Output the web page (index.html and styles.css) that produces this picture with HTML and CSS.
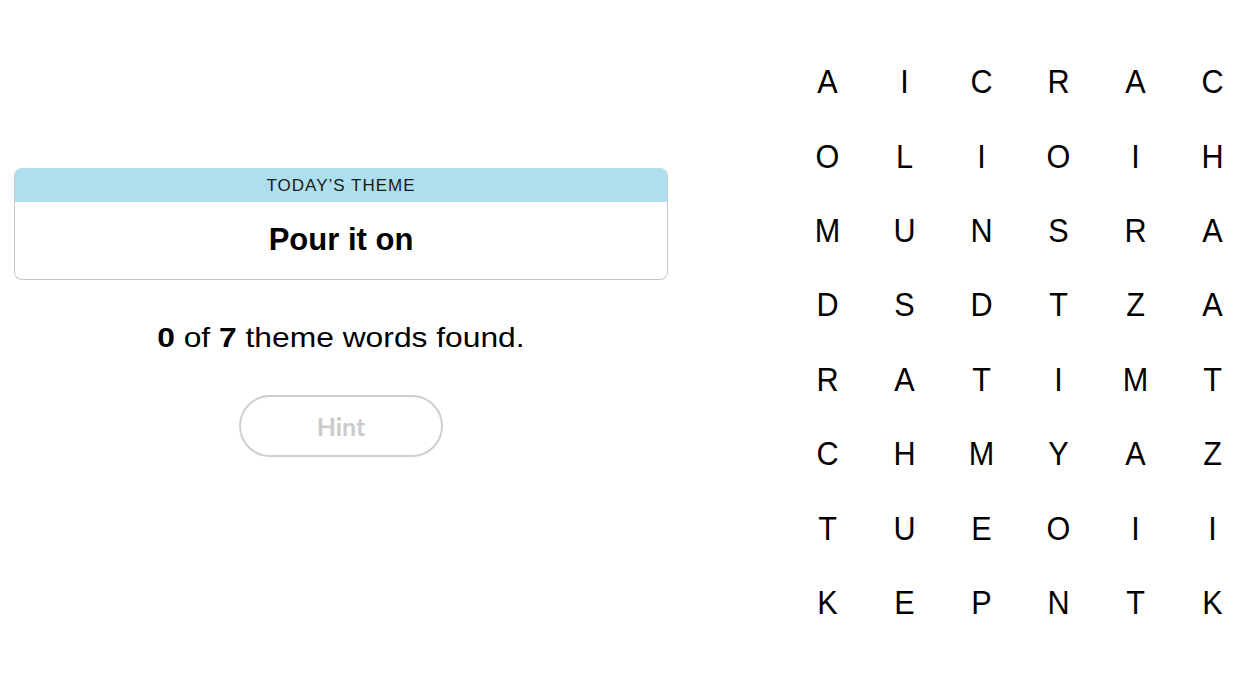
FILE: index.html
```html
<!DOCTYPE html>
<html lang="en">
<head>
<meta charset="utf-8">
<title>Strands</title>
<link rel="stylesheet" href="styles.css">
</head>
<body>
<main class="page">
  <section class="side">
    <div class="theme-card">
      <div class="theme-head">TODAY’S THEME</div>
      <div class="theme-body">Pour it on</div>
    </div>
    <p class="progress"><span class="wide"><b>0</b> of <b>7</b> theme words found.</span></p>
    <button class="hint" type="button">Hint</button>
  </section>
  <section class="board">
    <span>A</span><span>I</span><span>C</span><span>R</span><span>A</span><span>C</span>
    <span>O</span><span>L</span><span>I</span><span>O</span><span>I</span><span>H</span>
    <span>M</span><span>U</span><span>N</span><span>S</span><span>R</span><span>A</span>
    <span>D</span><span>S</span><span>D</span><span>T</span><span>Z</span><span>A</span>
    <span>R</span><span>A</span><span>T</span><span>I</span><span>M</span><span>T</span>
    <span>C</span><span>H</span><span>M</span><span>Y</span><span>A</span><span>Z</span>
    <span>T</span><span>U</span><span>E</span><span>O</span><span>I</span><span>I</span>
    <span>K</span><span>E</span><span>P</span><span>N</span><span>T</span><span>K</span>
  </section>
</main>
</body>
</html>
```
FILE: styles.css
```css
html, body {
  margin: 0;
  padding: 0;
  background: #fff;
  color: #000;
}
.page {
  display: flex;
  width: 1250px;
  height: 696px;
  overflow: hidden;
  font-family: "Liberation Sans", Arial, sans-serif;
}
.side {
  flex: 0 0 654px;
  margin-left: 14px;
  padding-top: 168px;
  display: flex;
  flex-direction: column;
  align-items: center;
}
.theme-card {
  width: 100%;
  box-sizing: border-box;
  border: 1px solid #c7c7c7;
  border-top: none;
  border-radius: 8px;
  overflow: hidden;
}
.theme-head {
  background: #aedfee;
  height: 34px;
  line-height: 35px;
  text-align: center;
  font-size: 17px;
  letter-spacing: 1px;
  color: #1a1a1a;
}
.theme-body {
  height: 77px;
  line-height: 76px;
  text-align: center;
  font-weight: bold;
  font-size: 31px;
}
.progress {
  margin: 40px 0 0;
  font-size: 28px;
  line-height: 36px;
  text-align: center;
}
.wide {
  display: inline-block;
  transform: scaleX(1.135);
}
.progress b { font-weight: bold; }
.hint {
  margin-top: 39px;
  width: 204px;
  height: 62px;
  box-sizing: border-box;
  border: 2px solid #cfcfcf;
  border-radius: 31px;
  background: #fff;
  color: #cbcbcb;
  font-family: Lato, sans-serif;
  font-weight: bold;
  font-size: 25px;
  padding: 0 0 1px;
}
.board {
  flex: 0 0 auto;
  margin-left: 121px;
  padding-top: 44px;
  display: grid;
  grid-template-columns: repeat(6, 77px);
  grid-auto-rows: 74.4px;
  align-content: start;
}
.board span {
  display: flex;
  align-items: center;
  justify-content: center;
  font-size: 34px;
  line-height: 1;
  transform: scaleX(0.9);
}
```
